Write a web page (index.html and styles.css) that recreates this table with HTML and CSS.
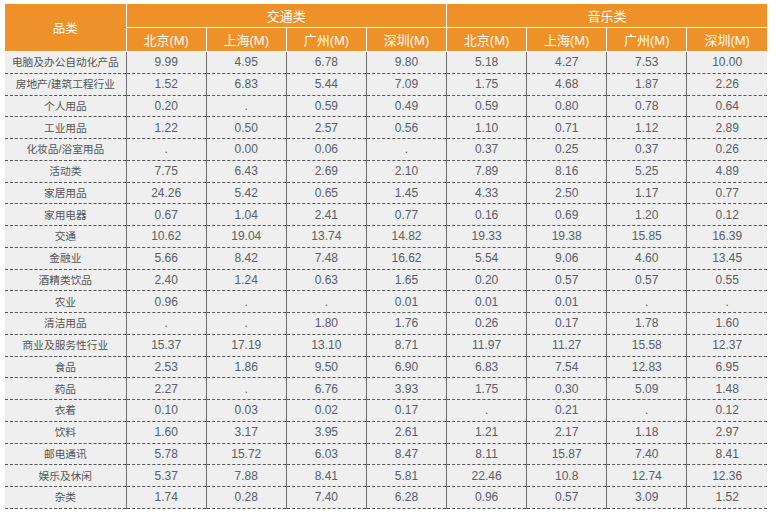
FILE: index.html
```html
<!DOCTYPE html>
<html lang="zh">
<head>
<meta charset="utf-8">
<title>品类数据表</title>
<link rel="stylesheet" href="styles.css">
</head>
<body>
<div class="wrap">
<table class="data">
<colgroup>
<col class="c-cat"><col class="c-num"><col class="c-num"><col class="c-num"><col class="c-num"><col class="c-num"><col class="c-num"><col class="c-num"><col class="c-num">
</colgroup>
<thead>
<tr class="h1"><th rowspan="2" class="cat">品类</th><th colspan="4">交通类</th><th colspan="4">音乐类</th></tr>
<tr class="h2"><th>北京(M)</th><th>上海(M)</th><th>广州(M)</th><th>深圳(M)</th><th>北京(M)</th><th>上海(M)</th><th>广州(M)</th><th>深圳(M)</th></tr>
</thead>
<tbody>
<tr><td class="name">电脑及办公自动化产品</td><td>9.99</td><td>4.95</td><td>6.78</td><td>9.80</td><td>5.18</td><td>4.27</td><td>7.53</td><td>10.00</td></tr>
<tr><td class="name">房地产/建筑工程行业</td><td>1.52</td><td>6.83</td><td>5.44</td><td>7.09</td><td>1.75</td><td>4.68</td><td>1.87</td><td>2.26</td></tr>
<tr><td class="name">个人用品</td><td>0.20</td><td>.</td><td>0.59</td><td>0.49</td><td>0.59</td><td>0.80</td><td>0.78</td><td>0.64</td></tr>
<tr><td class="name">工业用品</td><td>1.22</td><td>0.50</td><td>2.57</td><td>0.56</td><td>1.10</td><td>0.71</td><td>1.12</td><td>2.89</td></tr>
<tr><td class="name">化妆品/浴室用品</td><td>.</td><td>0.00</td><td>0.06</td><td>.</td><td>0.37</td><td>0.25</td><td>0.37</td><td>0.26</td></tr>
<tr><td class="name">活动类</td><td>7.75</td><td>6.43</td><td>2.69</td><td>2.10</td><td>7.89</td><td>8.16</td><td>5.25</td><td>4.89</td></tr>
<tr><td class="name">家居用品</td><td>24.26</td><td>5.42</td><td>0.65</td><td>1.45</td><td>4.33</td><td>2.50</td><td>1.17</td><td>0.77</td></tr>
<tr><td class="name">家用电器</td><td>0.67</td><td>1.04</td><td>2.41</td><td>0.77</td><td>0.16</td><td>0.69</td><td>1.20</td><td>0.12</td></tr>
<tr><td class="name">交通</td><td>10.62</td><td>19.04</td><td>13.74</td><td>14.82</td><td>19.33</td><td>19.38</td><td>15.85</td><td>16.39</td></tr>
<tr><td class="name">金融业</td><td>5.66</td><td>8.42</td><td>7.48</td><td>16.62</td><td>5.54</td><td>9.06</td><td>4.60</td><td>13.45</td></tr>
<tr><td class="name">酒精类饮品</td><td>2.40</td><td>1.24</td><td>0.63</td><td>1.65</td><td>0.20</td><td>0.57</td><td>0.57</td><td>0.55</td></tr>
<tr><td class="name">农业</td><td>0.96</td><td>.</td><td>.</td><td>0.01</td><td>0.01</td><td>0.01</td><td>.</td><td>.</td></tr>
<tr><td class="name">清洁用品</td><td>.</td><td>.</td><td>1.80</td><td>1.76</td><td>0.26</td><td>0.17</td><td>1.78</td><td>1.60</td></tr>
<tr><td class="name">商业及服务性行业</td><td>15.37</td><td>17.19</td><td>13.10</td><td>8.71</td><td>11.97</td><td>11.27</td><td>15.58</td><td>12.37</td></tr>
<tr><td class="name">食品</td><td>2.53</td><td>1.86</td><td>9.50</td><td>6.90</td><td>6.83</td><td>7.54</td><td>12.83</td><td>6.95</td></tr>
<tr><td class="name">药品</td><td>2.27</td><td>.</td><td>6.76</td><td>3.93</td><td>1.75</td><td>0.30</td><td>5.09</td><td>1.48</td></tr>
<tr><td class="name">衣着</td><td>0.10</td><td>0.03</td><td>0.02</td><td>0.17</td><td>.</td><td>0.21</td><td>.</td><td>0.12</td></tr>
<tr><td class="name">饮料</td><td>1.60</td><td>3.17</td><td>3.95</td><td>2.61</td><td>1.21</td><td>2.17</td><td>1.18</td><td>2.97</td></tr>
<tr><td class="name">邮电通讯</td><td>5.78</td><td>15.72</td><td>6.03</td><td>8.47</td><td>8.11</td><td>15.87</td><td>7.40</td><td>8.41</td></tr>
<tr><td class="name">娱乐及休闲</td><td>5.37</td><td>7.88</td><td>8.41</td><td>5.81</td><td>22.46</td><td>10.8</td><td>12.74</td><td>12.36</td></tr>
<tr><td class="name">杂类</td><td>1.74</td><td>0.28</td><td>7.40</td><td>6.28</td><td>0.96</td><td>0.57</td><td>3.09</td><td>1.52</td></tr>
</tbody>
</table>
</div>
</body>
</html>
```

FILE: styles.css
```css
html, body {
  margin: 0;
  padding: 0;
  background: #ffffff;
}

.wrap {
  padding: 4px 0 0 5px;
}

.data {
  border-collapse: collapse;
  table-layout: fixed;
  width: 762px;
  font-family: "Liberation Sans", "Noto Sans CJK SC", sans-serif;
  font-size: 12px;
  color: #596068;
}

.c-cat { width: 121px; }
.c-num { width: 80px; }

.data th {
  background: #ee9128;
  color: #ffffff;
  font-weight: normal;
  font-size: 13px;
  padding: 0;
  text-align: center;
  border-left: 1px solid #ffffff;
  border-right: 1px solid #ffffff;
  border-bottom: 1px solid #ffffff;
}

.data th:first-child { border-left: none; }
.data tr.h1 th:last-child, .data tr.h2 th:last-child { border-right: none; }

.data tr.h1 th { height: 23px; }
.data tr.h2 th { height: 23px; }
.data th.cat { font-size: 12.5px; }

.data td {
  background: #eeefee;
  height: 20.75px;
  padding: 0;
  text-align: center;
  border-left: 1px solid #707070;
  border-right: 1px solid #707070;
  border-bottom: 1px dashed #555555;
  white-space: nowrap;
  line-height: 14px;
}

.data td:first-child { border-left: none; }
.data td:last-child { border-right: none; }

.data td.name {
  font-size: 10.7px;
  color: #555555;
}
```
